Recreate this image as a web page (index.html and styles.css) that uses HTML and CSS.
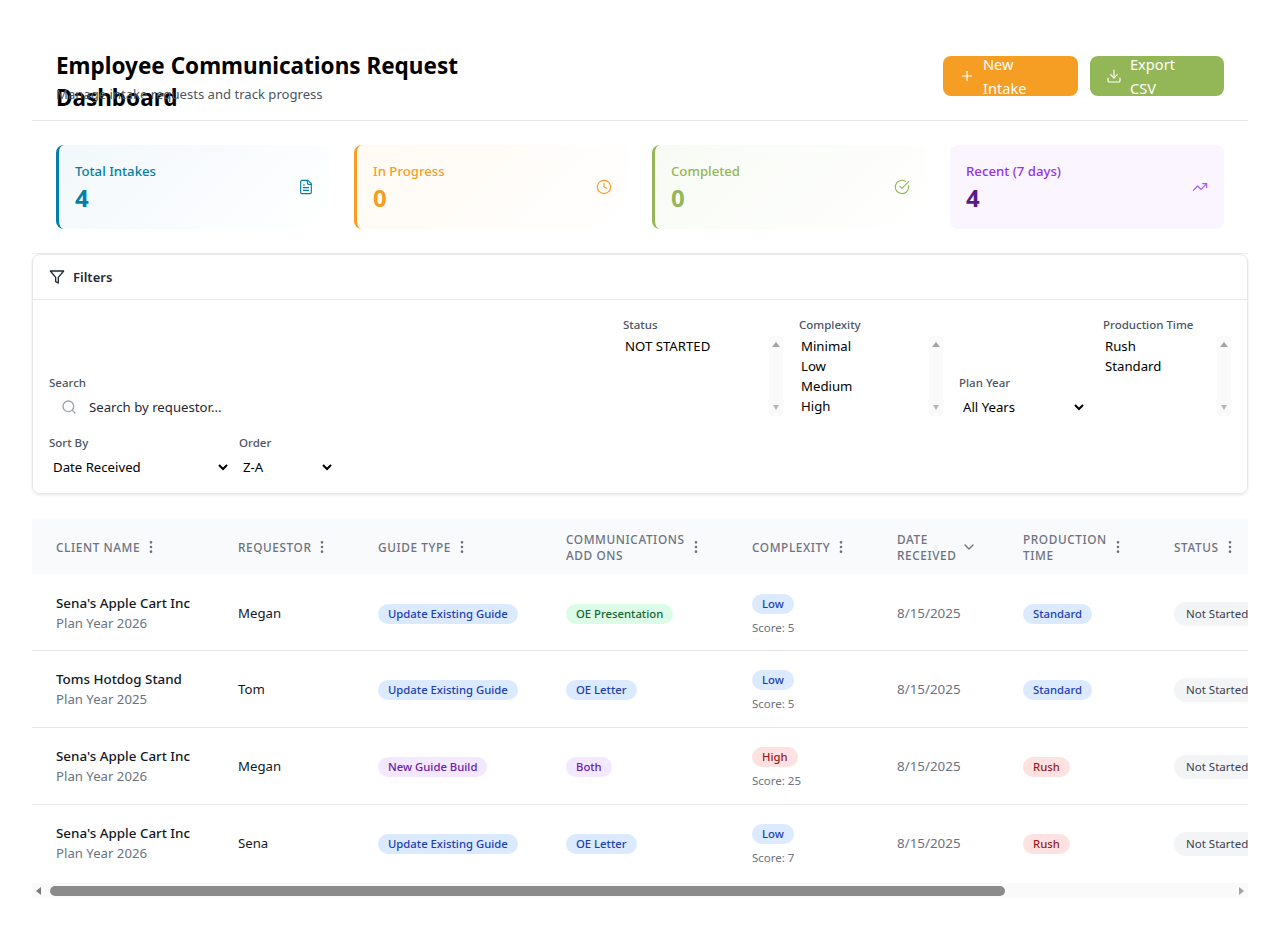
FILE: index.html

```html
<!DOCTYPE html>
<html lang="en">
<head>
    <meta charset="UTF-8">
    <meta name="viewport" content="width=device-width, initial-scale=1.0">
    <title>Employee Communications Request Dashboard</title>
    <link rel="stylesheet" href="styles.css">
</head>
<body>

<div class="page">

  <header class="top">
    <div class="top-text">
      <h1>Employee Communications Request Dashboard</h1>
      <p>Manage intake requests and track progress</p>
    </div>
    <div class="top-actions">
      <button class="btn btn-orange">
        <svg class="icon" viewBox="0 0 24 24"><path d="M5 12h14"/><path d="M12 5v14"/></svg>
        <span>New Intake</span>
      </button>
      <button class="btn btn-green">
        <svg class="icon" viewBox="0 0 24 24"><path d="M21 15v4a2 2 0 0 1-2 2H5a2 2 0 0 1-2-2v-4"/><path d="M7 10l5 5 5-5"/><path d="M12 15V3"/></svg>
        <span>Export CSV</span>
      </button>
    </div>
  </header>

  <section class="stats">
    <div class="stat stat-blue">
      <div class="stat-text">
        <div class="stat-label">Total Intakes</div>
        <div class="stat-value">4</div>
      </div>
      <svg class="icon" viewBox="0 0 24 24"><path d="M15 2H6a2 2 0 0 0-2 2v16a2 2 0 0 0 2 2h12a2 2 0 0 0 2-2V7z"/><path d="M14 2v4a2 2 0 0 0 2 2h4"/><path d="M10 9H8"/><path d="M16 13H8"/><path d="M16 17H8"/></svg>
    </div>
    <div class="stat stat-orange">
      <div class="stat-text">
        <div class="stat-label">In Progress</div>
        <div class="stat-value">0</div>
      </div>
      <svg class="icon" viewBox="0 0 24 24"><circle cx="12" cy="12" r="10"/><path d="M12 6v6l4 2"/></svg>
    </div>
    <div class="stat stat-green">
      <div class="stat-text">
        <div class="stat-label">Completed</div>
        <div class="stat-value">0</div>
      </div>
      <svg class="icon" viewBox="0 0 24 24"><path d="M21.8 10A10 10 0 1 1 17 3.3"/><path d="M9 11l3 3L22 4"/></svg>
    </div>
    <div class="stat stat-purple">
      <div class="stat-text">
        <div class="stat-label">Recent (7 days)</div>
        <div class="stat-value">4</div>
      </div>
      <svg class="icon" viewBox="0 0 24 24"><path d="M22 7l-8.5 8.5-5-5L2 17"/><path d="M16 7h6v6"/></svg>
    </div>
  </section>

  <section class="filters">
    <div class="filters-head">
      <svg class="icon" viewBox="0 0 24 24"><path d="M22 3H2l8 9.46V19l4 2v-8.54z"/></svg>
      <span>Filters</span>
    </div>
    <div class="filters-body">
      <div class="filter-row">
        <div class="field field-search">
          <label for="search">Search</label>
          <div class="search-box">
            <svg class="icon" viewBox="0 0 24 24"><circle cx="11" cy="11" r="8"/><path d="M21 21l-4.3-4.3"/></svg>
            <input id="search" type="text" placeholder="Search by requestor...">
          </div>
        </div>
        <div class="field w-160">
          <label for="status">Status</label>
          <div class="list">
            <select id="status" multiple size="4">
              <option>NOT STARTED</option>
            </select>
            <div class="vbar"><i class="tri-up"></i><i class="tri-down"></i></div>
          </div>
        </div>
        <div class="field w-144">
          <label for="complexity">Complexity</label>
          <div class="list">
            <select id="complexity" multiple size="4">
              <option>Minimal</option>
              <option>Low</option>
              <option>Medium</option>
              <option>High</option>
            </select>
            <div class="vbar"><i class="tri-up"></i><i class="tri-down"></i></div>
          </div>
        </div>
        <div class="field w-128">
          <label for="year">Plan Year</label>
          <select id="year" class="drop"><option>All Years</option></select>
        </div>
        <div class="field w-128">
          <label for="prod">Production Time</label>
          <div class="list">
            <select id="prod" multiple size="4">
              <option>Rush</option>
              <option>Standard</option>
            </select>
            <div class="vbar"><i class="tri-up"></i><i class="tri-down"></i></div>
          </div>
        </div>
      </div>
      <div class="filter-row filter-row-sort">
        <div class="field w-182">
          <label for="sort">Sort By</label>
          <select id="sort" class="drop"><option>Date Received</option></select>
        </div>
        <div class="field w-96">
          <label for="order">Order</label>
          <select id="order" class="drop"><option>Z-A</option></select>
        </div>
      </div>
    </div>
  </section>

  <section class="table-wrap">
    <div class="table-scroll">
      <table>
        <colgroup>
          <col class="c-client"><col class="c-req"><col class="c-guide"><col class="c-addons">
          <col class="c-complex"><col class="c-date"><col class="c-prod"><col class="c-status"><col class="c-rest">
        </colgroup>
        <thead>
          <tr>
            <th><div class="th"><span>Client Name</span><svg class="kebab" viewBox="0 0 24 24"><circle cx="12" cy="5" r="1"/><circle cx="12" cy="12" r="1"/><circle cx="12" cy="19" r="1"/></svg></div></th>
            <th><div class="th"><span>Requestor</span><svg class="kebab" viewBox="0 0 24 24"><circle cx="12" cy="5" r="1"/><circle cx="12" cy="12" r="1"/><circle cx="12" cy="19" r="1"/></svg></div></th>
            <th><div class="th"><span>Guide Type</span><svg class="kebab" viewBox="0 0 24 24"><circle cx="12" cy="5" r="1"/><circle cx="12" cy="12" r="1"/><circle cx="12" cy="19" r="1"/></svg></div></th>
            <th><div class="th"><span>Communications Add Ons</span><svg class="kebab" viewBox="0 0 24 24"><circle cx="12" cy="5" r="1"/><circle cx="12" cy="12" r="1"/><circle cx="12" cy="19" r="1"/></svg></div></th>
            <th><div class="th"><span>Complexity</span><svg class="kebab" viewBox="0 0 24 24"><circle cx="12" cy="5" r="1"/><circle cx="12" cy="12" r="1"/><circle cx="12" cy="19" r="1"/></svg></div></th>
            <th><div class="th"><span>Date Received</span><svg class="chev" viewBox="0 0 24 24"><path d="M6 9l6 6 6-6"/></svg></div></th>
            <th><div class="th"><span>Production Time</span><svg class="kebab" viewBox="0 0 24 24"><circle cx="12" cy="5" r="1"/><circle cx="12" cy="12" r="1"/><circle cx="12" cy="19" r="1"/></svg></div></th>
            <th><div class="th"><span>Status</span><svg class="kebab" viewBox="0 0 24 24"><circle cx="12" cy="5" r="1"/><circle cx="12" cy="12" r="1"/><circle cx="12" cy="19" r="1"/></svg></div></th>
            <th></th>
          </tr>
        </thead>
        <tbody>
          <tr>
            <td><div class="client">Sena's Apple Cart Inc</div><div class="sub">Plan Year 2026</div></td>
            <td>Megan</td>
            <td><span class="badge blue">Update Existing Guide</span></td>
            <td><span class="badge green">OE Presentation</span></td>
            <td class="cx"><span class="badge blue">Low</span><div class="score">Score: 5</div></td>
            <td class="date">8/15/2025</td>
            <td><span class="badge blue">Standard</span></td>
            <td><span class="state">Not Started</span></td>
            <td></td>
          </tr>
          <tr>
            <td><div class="client">Toms Hotdog Stand</div><div class="sub">Plan Year 2025</div></td>
            <td>Tom</td>
            <td><span class="badge blue">Update Existing Guide</span></td>
            <td><span class="badge blue">OE Letter</span></td>
            <td class="cx"><span class="badge blue">Low</span><div class="score">Score: 5</div></td>
            <td class="date">8/15/2025</td>
            <td><span class="badge blue">Standard</span></td>
            <td><span class="state">Not Started</span></td>
            <td></td>
          </tr>
          <tr>
            <td><div class="client">Sena's Apple Cart Inc</div><div class="sub">Plan Year 2026</div></td>
            <td>Megan</td>
            <td><span class="badge purple">New Guide Build</span></td>
            <td><span class="badge purple">Both</span></td>
            <td class="cx"><span class="badge red">High</span><div class="score">Score: 25</div></td>
            <td class="date">8/15/2025</td>
            <td><span class="badge red">Rush</span></td>
            <td><span class="state">Not Started</span></td>
            <td></td>
          </tr>
          <tr>
            <td><div class="client">Sena's Apple Cart Inc</div><div class="sub">Plan Year 2026</div></td>
            <td>Sena</td>
            <td><span class="badge blue">Update Existing Guide</span></td>
            <td><span class="badge blue">OE Letter</span></td>
            <td class="cx"><span class="badge blue">Low</span><div class="score">Score: 7</div></td>
            <td class="date">8/15/2025</td>
            <td><span class="badge red">Rush</span></td>
            <td><span class="state">Not Started</span></td>
            <td></td>
          </tr>
        </tbody>
      </table>
    </div>
    <div class="hbar">
      <i class="tri-left"></i>
      <div class="hbar-track"><div class="hbar-thumb"></div></div>
      <i class="tri-right"></i>
    </div>
  </section>

</div>

</body>
</html>
```

FILE: styles.css

```css
* {
    box-sizing: border-box;
}
body {
    margin: 0;
    background: #fff;
    color: #111827;
    font-family: "Noto Sans", "Open Sans", sans-serif;
    font-size: 13.2px;
    line-height: 20px;
}
.page {
    padding: 32px 32px 0;
}
.icon {
    width: 16px;
    height: 16px;
    flex: none;
    fill: none;
    stroke: currentColor;
    stroke-width: 2;
    stroke-linecap: round;
    stroke-linejoin: round;
}
.stat .icon, .btn .icon {
    stroke-width: 1.7;
}

/* header */
.top {
    display: flex;
    justify-content: space-between;
    align-items: center;
    height: 89px;
    padding: 0 24px;
    border-bottom: 1px solid #e5e7eb;
}
.top-text {
    width: 440px;
    padding-top: 2px;
}
.top h1 {
    margin: 0 0 2px;
    height: 32px;
    font-size: 22.5px;
    line-height: 32px;
    font-weight: 700;
    color: #000;
}
.top p {
    margin: 0;
    font-size: 13.1px;
    color: #4b5563;
}
.top-actions {
    display: flex;
    gap: 12px;
}
.btn {
    display: flex;
    align-items: center;
    gap: 8px;
    width: 135px;
    height: 40px;
    padding: 0 16px;
    border: 0;
    border-radius: 8px;
    color: #fff;
    font: inherit;
    font-size: 14.6px;
    line-height: 24px;
    text-align: left;
}
.btn span {
    width: min-content;
}
.btn-orange {
    background: #f69d23;
}
.btn-green {
    width: 134px;
    background: #93b657;
}

/* stat cards */
.stats {
    display: grid;
    grid-template-columns: repeat(4, 1fr);
    gap: 24px;
    padding: 24px;
    border-bottom: 1px solid #eeeff1;
}
.stat {
    display: flex;
    justify-content: space-between;
    align-items: center;
    height: 84px;
    padding: 0 16px;
    border-radius: 8px;
    border-left: 3px solid;
}
.stat-label {
    font-weight: 500;
}
.stat-value {
    margin-top: 1px;
    font-size: 24px;
    line-height: 32px;
    font-weight: 700;
}
.stat-blue {
    border-color: #037fa5;
    color: #037fa5;
    background: linear-gradient(135deg, #f2f8fb, #fff);
}
.stat-orange {
    border-color: #f69d23;
    color: #f69d23;
    background: linear-gradient(135deg, #fffaf3, #fff);
}
.stat-green {
    border-color: #93b657;
    color: #93b657;
    background: linear-gradient(135deg, #f8fbf4, #fff);
}
.stat-purple {
    border-left: 0;
    color: #a855f7;
    background: #faf5ff;
}
.stat-purple .stat-label {
    color: #9333ea;
}
.stat-purple .stat-value {
    color: #581c87;
}

/* filters */
.filters {
    height: 240px;
    border: 1px solid #e5e7eb;
    border-radius: 8px;
    box-shadow: 0 1px 3px rgba(0, 0, 0, 0.1);
}
.filters-head {
    display: flex;
    align-items: center;
    gap: 8px;
    height: 45px;
    padding: 0 16px;
    border-bottom: 1px solid #e5e7eb;
    font-size: 13px;
    font-weight: 600;
    color: #1f2937;
}
.filters-body {
    padding: 16px;
}
.filter-row {
    display: flex;
    align-items: flex-end;
    gap: 16px;
}
.filter-row-sort {
    gap: 8px;
    margin-top: 15px;
}
.field label {
    display: block;
    padding-top: 1px;
    margin-bottom: 4px;
    font-size: 11.5px;
    line-height: 16px;
    font-weight: 500;
    color: #4b5563;
}
.field-search {
    flex: 1;
}
.w-160 { width: 160px; }
.w-144 { width: 144px; }
.w-128 { width: 128px; }
.w-182 { width: 182px; }
.w-96 { width: 96px; }
.field select {
    display: block;
    border: 0;
    background: #fff;
    color: #000;
    font: inherit;
    outline: 0;
}
.drop {
    width: 100%;
    height: 24px;
    padding: 0;
}
.list {
    display: flex;
    height: 80px;
    margin: -1px 0 3px;
}
.field .list select {
    flex: 1;
    min-width: 0;
    height: 80px;
    padding: 0;
    overflow: hidden;
}
.field option {
    height: 20px;
    min-height: 20px;
    padding: 1px 2px 0;
}
.vbar {
    display: flex;
    flex-direction: column;
    justify-content: space-between;
    align-items: center;
    width: 14px;
    padding: 6px 0;
    background: #fafafa;
}
.tri-up {
    width: 0;
    height: 0;
    border-left: 4px solid transparent;
    border-right: 4px solid transparent;
    border-bottom: 5px solid #a3a3a3;
}
.tri-down {
    width: 0;
    height: 0;
    border-left: 3px solid transparent;
    border-right: 3px solid transparent;
    border-top: 5px solid #b5b5b5;
}
.search-box {
    display: flex;
    align-items: center;
    height: 24px;
    padding-left: 12px;
    gap: 12px;
    color: #9ca3af;
}
.search-box input {
    flex: 1;
    min-width: 0;
    border: 0;
    padding: 0;
    font: inherit;
    outline: 0;
}
.search-box input::placeholder {
    color: #1f2937;
    opacity: 1;
}

/* table */
.table-wrap {
    margin-top: 25px;
}
.table-scroll {
    height: 364px;
    overflow: hidden;
}
.hbar {
    display: flex;
    align-items: center;
    height: 15px;
    background: #fafafa;
}
.tri-left, .tri-right {
    flex: none;
    width: 0;
    height: 0;
    border-top: 4px solid transparent;
    border-bottom: 4px solid transparent;
}
.tri-left {
    margin: 0 6px 0 4px;
    border-right: 5px solid #7a7a7a;
}
.tri-right {
    margin: 0 4px 0 6px;
    border-left: 5px solid #a3a3a3;
}
.hbar-track {
    flex: 1;
    padding-left: 3px;
}
.hbar-thumb {
    width: 955px;
    height: 10px;
    margin-top: 1px;
    border-radius: 5px;
    background: #8b8b8b;
}
table {
    width: 1500px;
    table-layout: fixed;
    border-collapse: collapse;
}
.c-client { width: 182px; }
.c-req { width: 140px; }
.c-guide { width: 188px; }
.c-addons { width: 186px; }
.c-complex { width: 145px; }
.c-date { width: 126px; }
.c-prod { width: 151px; }
.c-status { width: 180px; }
thead tr {
    height: 55px;
    background: #f9fafb;
}
th {
    padding: 0 24px;
    text-align: left;
    font-size: 11.8px;
    line-height: 16px;
    font-weight: 500;
    letter-spacing: 0.05em;
    text-transform: uppercase;
    color: #6b7280;
}
.th {
    display: flex;
    align-items: center;
    gap: 3px;
}
.kebab {
    width: 16px;
    height: 16px;
    flex: none;
    fill: currentColor;
    stroke: currentColor;
    stroke-width: 2;
}
.chev {
    width: 16px;
    height: 16px;
    margin-left: 2px;
    flex: none;
    fill: none;
    stroke: currentColor;
    stroke-width: 2;
    stroke-linecap: round;
    stroke-linejoin: round;
}
tbody tr {
    height: 77px;
    border-bottom: 1px solid #e5e7eb;
}
tbody tr:first-child {
    height: 76px;
}
tbody tr:last-child {
    border-bottom: 0;
}
td {
    padding: 0 24px;
    white-space: nowrap;
}
tbody tr:first-child td {
    padding: 3px 24px 0;
}
.client {
    font-size: 13.4px;
    font-weight: 500;
    color: #111827;
}
.sub, .date {
    color: #6b7280;
}
.date {
    font-size: 13.4px;
}
.badge {
    display: inline-block;
    margin-top: 2px;
    padding: 2px 10px;
    border-radius: 999px;
    font-size: 11.3px;
    line-height: 16px;
    font-weight: 500;
    vertical-align: middle;
}
tbody tr td.cx {
    padding: 4px 24px 0;
}
tbody tr:first-child td.cx {
    padding: 7px 24px 0;
}
.cx .badge {
    margin-top: 0;
    display: block;
    width: max-content;
}
.blue { background: #dbeafe; color: #1e40af; }
.green { background: #dcfce7; color: #166534; }
.purple { background: #f3e8ff; color: #6b21a8; }
.red { background: #fee2e2; color: #991b1b; }
.score {
    margin-top: 6px;
    font-size: 11.5px;
    line-height: 16px;
    color: #6b7280;
}
.state {
    display: inline-block;
    margin-top: 2px;
    padding: 4px 12px;
    border-radius: 999px;
    background: #f3f4f6;
    color: #374151;
    font-size: 11.5px;
    line-height: 16px;
    vertical-align: middle;
}
```
